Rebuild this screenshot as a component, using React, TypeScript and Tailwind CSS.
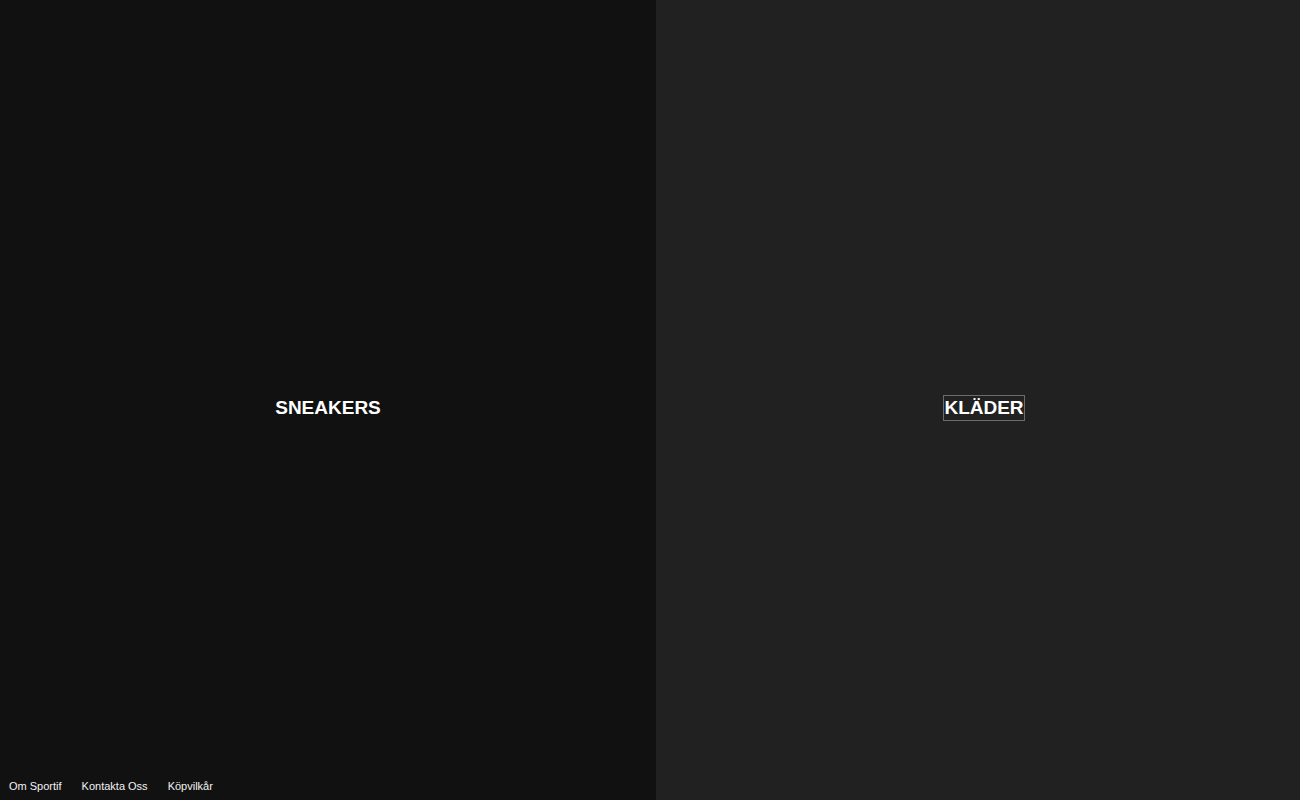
export default function App() {
  return (
    <div className="relative flex h-[800px] w-full overflow-hidden font-['Liberation_Sans',Arial,sans-serif] text-white">
      <a className="flex h-[816px] w-[656px] shrink-0 items-center justify-center bg-[#111111]">
        <span className="text-[19px] font-bold">SNEAKERS</span>
      </a>
      <a className="flex h-[816px] w-[656px] shrink-0 items-center justify-center bg-[#222121]">
        <span className="border border-[#6b6b6b] text-[19px] font-bold leading-[24px]">
          KLÄDER
        </span>
      </a>

      <footer className="absolute bottom-0 left-0 flex gap-5 pb-[6px] pl-[9px] text-[11px] text-[#f2f2f2]">
        <a>Om Sportif</a>
        <a>Kontakta Oss</a>
        <a>Köpvilkår</a>
      </footer>
    </div>
  );
}
